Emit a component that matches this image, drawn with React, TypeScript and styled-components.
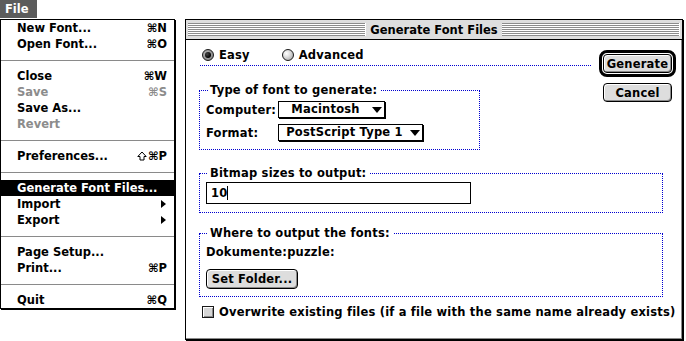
import React from 'react';
import styled, { createGlobalStyle } from 'styled-components';

const GlobalStyle = createGlobalStyle`
  html, body { margin: 0; padding: 0; background: #fff; }
  body {
    font-family: "DejaVu Sans", "Liberation Sans", sans-serif;
    font-weight: bold;
    font-size: 11.5px;
    color: #000;
  }
  * { box-sizing: border-box; }
`;

const Screen = styled.div`
  width: 686px;
  height: 341px;
  display: flex;
  align-items: flex-start;
  overflow: hidden;
  background: #fff;
`;

/* ---------- Menu ---------- */
const MenuColumn = styled.div`
  display: flex;
  flex-direction: column;
  align-items: flex-start;
  width: 176px;
  flex: none;
`;

const MenuTitle = styled.div`
  height: 18px;
  width: 37px;
  background: #5c5c5c;
  color: #fff;
  padding-left: 5px;
  line-height: 18px;
`;

const MenuPanel = styled.div`
  margin-top: 1px;
  width: 175px;
  border: 1px solid #000;
  box-shadow: 1px 1px 0 #000;
  background: #fff;
  display: flex;
  flex-direction: column;
`;

const MenuItem = styled.div<{ $disabled?: boolean; $active?: boolean }>`
  height: 16px;
  line-height: 16px;
  display: flex;
  align-items: center;
  justify-content: space-between;
  padding: 0 7px 0 16px;
  white-space: nowrap;
  color: ${(p) => (p.$active ? '#fff' : p.$disabled ? '#8c8c8c' : '#000')};
  background: ${(p) => (p.$active ? '#000' : 'transparent')};
`;

const Shortcut = styled.span`
  display: flex;
  align-items: center;
  gap: 1px;
`;

const SubArrow = styled.span`
  width: 0;
  height: 0;
  margin-right: 1px;
  border-top: 4px solid transparent;
  border-bottom: 4px solid transparent;
  border-left: 5px solid #000;
`;

const Separator = styled.div`
  height: 16px;
  display: flex;
  align-items: center;
  &::after {
    content: '';
    flex: 1;
    height: 1px;
    background: #8a8a8a;
  }
`;

/* ---------- Window ---------- */
const Window = styled.div`
  margin-left: 9px;
  margin-top: 19px;
  width: 498px;
  height: 321px;
  flex: none;
  border: 1px solid #000;
  box-shadow: 1px 1px 0 #000;
  background: #fff;
  display: flex;
  flex-direction: column;
`;

const TitleBar = styled.div`
  height: 20px;
  flex: none;
  background: #dedede;
  border-bottom: 1px solid #000;
  display: flex;
  align-items: center;
  gap: 4px;
  padding: 0 2px;
`;

const Stripes = styled.div`
  flex: 1;
  height: 13px;
  background: repeating-linear-gradient(
    to bottom,
    #8c8c8c 0 1px,
    #ffffff 1px 2px
  );
  border-right: 1px solid #fff;
`;

const Title = styled.div`
  flex: none;
  line-height: 16px;
`;

const Body = styled.div`
  flex: 1;
  display: flex;
  flex-direction: column;
  border-right: 1px solid #8a8a8a;
  border-bottom: 1px solid #8a8a8a;
  padding-left: 13px;
  letter-spacing: 0.2px;
`;

const TopRow = styled.div`
  display: flex;
  align-items: flex-start;
`;

const LeftTop = styled.div`
  width: 392px;
  display: flex;
  flex-direction: column;
`;

const RadioRow = styled.div`
  margin: 7px 0 0 1px;
  height: 19px;
  border-bottom: 1px dotted #0000d0;
  display: flex;
  align-items: center;
  gap: 32px;
  padding: 0 0 3px 2px;
`;

const RadioItem = styled.label`
  display: flex;
  align-items: center;
  gap: 5px;
  line-height: 16px;
`;

const RadioDot = styled.span<{ $on?: boolean }>`
  width: 12px;
  height: 12px;
  border-radius: 50%;
  border: 1px solid #1a1a1a;
  display: flex;
  align-items: center;
  justify-content: center;
  background: ${(p) =>
    p.$on
      ? 'radial-gradient(circle at 40% 40%, #bbb 0%, #777 100%)'
      : 'radial-gradient(circle at 35% 35%, #ffffff 0%, #e2e2e2 35%, #9a9a9a 100%)'};
  &::after {
    content: '';
    display: ${(p) => (p.$on ? 'block' : 'none')};
    width: 6px;
    height: 6px;
    border-radius: 50%;
    background: radial-gradient(circle at 35% 35%, #444 0%, #000 70%);
  }
`;

const ButtonCol = styled.div`
  margin: 10px 0 0 8px;
  display: flex;
  flex-direction: column;
  align-items: flex-start;
`;

const DefaultRing = styled.div`
  border: 3px solid #000;
  border-radius: 8px;
  padding: 1px;
`;

const PushButton = styled.div<{ $w: number }>`
  width: ${(p) => p.$w}px;
  height: 19px;
  border: 1px solid #000;
  border-radius: 4px;
  background: #dddddd;
  box-shadow: inset 1px 1px 0 #fff, inset -1px -1px 0 #8a8a8a;
  display: flex;
  align-items: center;
  justify-content: center;
  line-height: 16px;
`;

const CancelWrap = styled.div`
  margin: 6px 0 0 4px;
`;

const Group = styled.fieldset<{ $w: number; $pt: number; $pb: number }>`
  margin: 0;
  min-width: 0;
  width: ${(p) => p.$w}px;
  border: 1px dotted #0000d0;
  padding: ${(p) => p.$pt}px 0 ${(p) => p.$pb}px 6px;
`;

const GroupTitle = styled.legend`
  margin-left: 2px;
  padding: 0 4px 0 2px;
  line-height: 14px;
`;

const TypeGroup = styled(Group)`
  margin-top: 17px;
`;

const BitmapGroup = styled(Group)`
  margin-top: 16px;
`;

const OutputGroup = styled(Group)`
  margin-top: 13px;
`;

const FieldRows = styled.div`
  display: grid;
  grid-template-columns: 72px auto;
  row-gap: 6px;
  align-items: center;
  justify-items: start;
`;

const Popup = styled.div<{ $w: number }>`
  width: ${(p) => p.$w}px;
  height: 17px;
  border: 1px solid #000;
  box-shadow: 1px 1px 0 #000;
  display: flex;
  align-items: center;
  padding-right: 2px;
  line-height: 15px;
`;

const PopupText = styled.span`
  flex: 1;
  text-align: center;
`;

const PopupArrow = styled.span`
  width: 0;
  height: 0;
  border-left: 5px solid transparent;
  border-right: 5px solid transparent;
  border-top: 6px solid #000;
`;

const TextField = styled.div`
  margin-top: 1px;
  width: 265px;
  height: 22px;
  border: 1px solid #000;
  display: flex;
  align-items: center;
  padding-left: 4px;
  line-height: 16px;
`;

const Caret = styled.span`
  width: 1px;
  height: 14px;
  background: #000;
`;

const PathText = styled.div`
  line-height: 16px;
`;

const FolderButton = styled(PushButton)`
  margin-top: 9px;
  height: 20px;
`;

const CheckRow = styled.label`
  margin: 8px 0 0 3px;
  display: flex;
  align-items: center;
  gap: 5px;
  line-height: 14px;
  white-space: nowrap;
`;

const CheckBox = styled.span`
  width: 12px;
  height: 12px;
  border: 1px solid #1a1a1a;
  background: #d6d6d6;
  box-shadow: inset 1px 1px 0 #fff, inset -1px -1px 0 #8a8a8a;
`;

const ShiftIcon = () => (
  <svg width="10" height="10" viewBox="0 0 10 10" aria-hidden="true">
    <path
      d="M5 1 L9.2 5.5 L7 5.5 L7 9 L3 9 L3 5.5 L0.8 5.5 Z"
      fill="none"
      stroke="#000"
      strokeWidth="1"
    />
  </svg>
);

type Item =
  | { kind: 'sep' }
  | {
      kind: 'item';
      label: string;
      key?: string;
      shift?: boolean;
      disabled?: boolean;
      active?: boolean;
      sub?: boolean;
    };

const menu: Item[] = [
  { kind: 'item', label: 'New Font...', key: '⌘N' },
  { kind: 'item', label: 'Open Font...', key: '⌘O' },
  { kind: 'sep' },
  { kind: 'item', label: 'Close', key: '⌘W' },
  { kind: 'item', label: 'Save', key: '⌘S', disabled: true },
  { kind: 'item', label: 'Save As...' },
  { kind: 'item', label: 'Revert', disabled: true },
  { kind: 'sep' },
  { kind: 'item', label: 'Preferences...', key: '⌘P', shift: true },
  { kind: 'sep' },
  { kind: 'item', label: 'Generate Font Files...', active: true },
  { kind: 'item', label: 'Import', sub: true },
  { kind: 'item', label: 'Export', sub: true },
  { kind: 'sep' },
  { kind: 'item', label: 'Page Setup...' },
  { kind: 'item', label: 'Print...', key: '⌘P' },
  { kind: 'sep' },
  { kind: 'item', label: 'Quit', key: '⌘Q' },
];

export default function App() {
  return (
    <>
      <GlobalStyle />
      <Screen>
        <MenuColumn>
          <MenuTitle>File</MenuTitle>
          <MenuPanel>
            {menu.map((m, i) =>
              m.kind === 'sep' ? (
                <Separator key={i} />
              ) : (
                <MenuItem key={i} $disabled={m.disabled} $active={m.active}>
                  <span>{m.label}</span>
                  {m.key && (
                    <Shortcut>
                      {m.shift && <ShiftIcon />}
                      {m.key}
                    </Shortcut>
                  )}
                  {m.sub && <SubArrow />}
                </MenuItem>
              )
            )}
          </MenuPanel>
        </MenuColumn>

        <Window>
          <TitleBar>
            <Stripes />
            <Title>Generate Font Files</Title>
            <Stripes />
          </TitleBar>
          <Body>
            <TopRow>
              <LeftTop>
                <RadioRow>
                  <RadioItem>
                    <RadioDot $on />
                    Easy
                  </RadioItem>
                  <RadioItem>
                    <RadioDot />
                    Advanced
                  </RadioItem>
                </RadioRow>
                <TypeGroup $w={281} $pt={4} $pb={8}>
                  <GroupTitle>Type of font to generate:</GroupTitle>
                  <FieldRows>
                    <span>Computer:</span>
                    <Popup $w={107}>
                      <PopupText>Macintosh</PopupText>
                      <PopupArrow />
                    </Popup>
                    <span>Format:</span>
                    <Popup $w={145}>
                      <PopupText>PostScript Type 1</PopupText>
                      <PopupArrow />
                    </Popup>
                  </FieldRows>
                </TypeGroup>
              </LeftTop>
              <ButtonCol>
                <DefaultRing>
                  <PushButton $w={69}>Generate</PushButton>
                </DefaultRing>
                <CancelWrap>
                  <PushButton $w={69}>Cancel</PushButton>
                </CancelWrap>
              </ButtonCol>
            </TopRow>

            <BitmapGroup $w={464} $pt={1} $pb={8}>
              <GroupTitle>Bitmap sizes to output:</GroupTitle>
              <TextField>
                10
                <Caret />
              </TextField>
            </BitmapGroup>

            <OutputGroup $w={464} $pt={4} $pb={7}>
              <GroupTitle>Where to output the fonts:</GroupTitle>
              <PathText>Dokumente:puzzle:</PathText>
              <FolderButton $w={92}>Set Folder...</FolderButton>
            </OutputGroup>

            <CheckRow>
              <CheckBox />
              Overwrite existing files (if a file with the same name already exists)
            </CheckRow>
          </Body>
        </Window>
      </Screen>
    </>
  );
}
